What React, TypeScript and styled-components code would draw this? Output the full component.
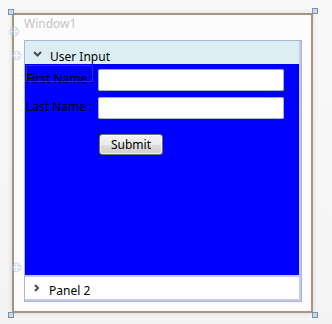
import React from "react";
import styled, { createGlobalStyle } from "styled-components";

const GlobalStyle = createGlobalStyle`
  html, body { margin: 0; padding: 0; }
  body {
    background: #f6f6f6;
    font-family: "Noto Sans", "Open Sans", sans-serif;
    font-size: 12px;
  }
`;

const Stage = styled.div`
  position: relative;
  width: 332px;
  height: 324px;
  box-sizing: border-box;
  padding: 13px 0 0 12px;
  background: linear-gradient(#f9f9f9, #f4f4f4);
`;

const Window = styled.div`
  position: relative;
  width: 301px;
  height: 300px;
  box-sizing: border-box;
  border: 2px solid #a39483;
  background: #fcfcfc;
  box-shadow: 0 0 6px rgba(0, 0, 0, 0.12);
  display: flex;
  flex-direction: column;
  padding: 0 9px 9px 10px;
`;

const Handle = styled.div<{ $x: number; $y: number }>`
  position: absolute;
  left: ${(p) => p.$x}px;
  top: ${(p) => p.$y}px;
  width: 4px;
  height: 4px;
  background: #cbd9e6;
  border: 1px solid #7d93ad;
`;

const Title = styled.div`
  height: 25px;
  line-height: 16px;
  padding-top: 1px;
  box-sizing: border-box;
  color: #c4c4c4;
  font-size: 12px;
  flex: none;
`;

const Stack = styled.div`
  flex: 1;
  border: 1px solid #a7b7ce;
  display: flex;
  flex-direction: column;
  min-height: 0;
`;

const Expander = styled.div<{ $grow?: boolean }>`
  display: flex;
  flex-direction: column;
  border-right: 2px solid #c6c8f1;
  border-bottom: 2px solid #c6c8f1;
  flex: ${(p) => (p.$grow ? "1" : "none")};
  min-height: 0;
`;

const Header = styled.div<{ $open?: boolean; $pt: number }>`
  height: ${(p) => (p.$open ? 23 : 22)}px;
  box-sizing: border-box;
  padding-top: ${(p) => p.$pt}px;
  background: ${(p) => (p.$open ? "#dcedf4" : "#ffffff")};
  display: flex;
  align-items: flex-start;
  flex: none;
`;

const Chevron = styled.span<{ $open?: boolean }>`
  width: 25px;
  display: flex;
  justify-content: center;
  margin-top: ${(p) => (p.$open ? 2 : 1)}px;
  margin-left: ${(p) => (p.$open ? 0 : -1)}px;
`;

const HeaderText = styled.span`
  line-height: 16px;
  color: #000;
  font-size: 12px;
`;

const Content = styled.div`
  flex: 1;
  background: #0000ff;
  padding: 5px 0 0 1px;
  display: grid;
  grid-template-columns: 72px 186px;
  grid-template-rows: 22px 22px;
  row-gap: 6px;
  align-content: start;
`;

const Label = styled.label<{ $selected?: boolean }>`
  position: relative;
  align-self: start;
  margin-top: 2px;
  line-height: 16px;
  color: #000;
  font-size: 12px;
  white-space: nowrap;
  ${(p) =>
    p.$selected
      ? `&::after {
    content: "";
    position: absolute;
    left: 0;
    top: -6px;
    width: 65px;
    height: 15px;
    border: 1px solid rgba(90, 90, 110, 0.55);
  }`
      : ""}
`;

const TextBox = styled.input`
  width: 186px;
  height: 22px;
  box-sizing: border-box;
  border: 1px solid #abb2c2;
  border-top-color: #a0a4b0;
  border-radius: 2px;
  background: #fff;
  margin: 0;
  padding: 0 3px;
  font: inherit;
`;

const ButtonCell = styled.div`
  grid-column: 2;
  padding-top: 9px;
  padding-left: 1px;
`;

const Button = styled.button`
  width: 64px;
  height: 21px;
  box-sizing: border-box;
  border: 1px solid #707070;
  border-radius: 3px;
  background: linear-gradient(#f2f2f2 0%, #ebebeb 50%, #dddddd 51%, #cfcfcf 100%);
  box-shadow: inset 0 0 0 1px rgba(255, 255, 255, 0.7);
  color: #000;
  font-family: inherit;
  font-size: 12px;
  line-height: 16px;
  padding: 0;
`;

const Adorner = styled.svg<{ $x: number; $y: number }>`
  position: absolute;
  left: ${(p) => p.$x}px;
  top: ${(p) => p.$y}px;
  width: 11px;
  height: 11px;
  opacity: 0.45;
`;

const AdornerIcon = ({ x, y }: { x: number; y: number }) => (
  <Adorner $x={x} $y={y} viewBox="0 0 11 11">
    <circle cx="5.5" cy="5.5" r="5" fill="#a9c4e6" />
    <path d="M5.5 2v7M2 5.5h7" stroke="#fff" strokeWidth="1.2" />
    <path d="M4.3 3.2L5.5 2l1.2 1.2M4.3 7.8L5.5 9l1.2-1.2M3.2 4.3L2 5.5l1.2 1.2M7.8 4.3L9 5.5 7.8 6.7" stroke="#fff" strokeWidth="0.9" fill="none" />
  </Adorner>
);

const DownChevron = () => (
  <svg width="9" height="6" viewBox="0 0 9 6">
    <path d="M1 1l3.5 3.5L8 1" stroke="#4a4a4a" strokeWidth="2" fill="none" />
  </svg>
);

const RightChevron = () => (
  <svg width="6" height="8" viewBox="0 0 6 8">
    <path d="M1 1l3 3-3 3" stroke="#4a4a4a" strokeWidth="2" fill="none" />
  </svg>
);

export default function App() {
  return (
    <>
      <GlobalStyle />
      <Stage>
        <Window>
          <Handle $x={-6} $y={-6} />
          <Handle $x={298} $y={-7} />
          <Handle $x={-6} $y={297} />
          <Handle $x={298} $y={297} />
          <Title>Window1</Title>
          <Stack>
            <Expander $grow>
              <Header $open $pt={8}>
                <Chevron $open>
                  <DownChevron />
                </Chevron>
                <HeaderText>User Input</HeaderText>
              </Header>
              <Content>
                <Label $selected>First Name :</Label>
                <TextBox />
                <Label>Last Name :</Label>
                <TextBox />
                <ButtonCell>
                  <Button>Submit</Button>
                </ButtonCell>
              </Content>
            </Expander>
            <Expander>
              <Header $pt={6}>
                <Chevron>
                  <RightChevron />
                </Chevron>
                <HeaderText>Panel 2</HeaderText>
              </Header>
            </Expander>
          </Stack>
        </Window>
        <AdornerIcon x={9} y={26} />
        <AdornerIcon x={11} y={50} />
        <AdornerIcon x={11} y={262} />
      </Stage>
    </>
  );
}
